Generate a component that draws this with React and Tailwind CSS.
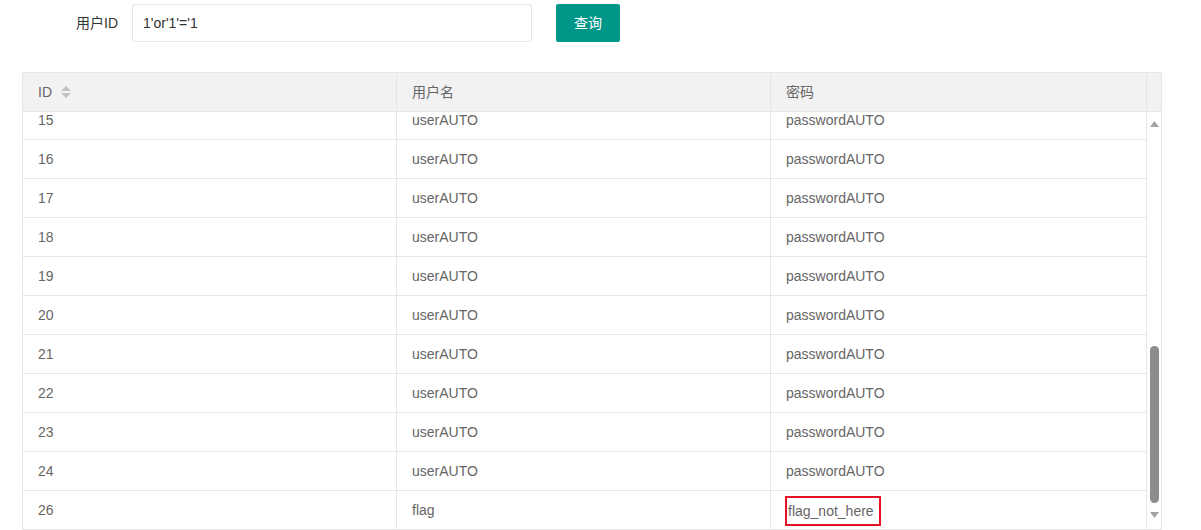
import React from "react";

const rows = [
  ["15", "userAUTO", "passwordAUTO"],
  ["16", "userAUTO", "passwordAUTO"],
  ["17", "userAUTO", "passwordAUTO"],
  ["18", "userAUTO", "passwordAUTO"],
  ["19", "userAUTO", "passwordAUTO"],
  ["20", "userAUTO", "passwordAUTO"],
  ["21", "userAUTO", "passwordAUTO"],
  ["22", "userAUTO", "passwordAUTO"],
  ["23", "userAUTO", "passwordAUTO"],
  ["24", "userAUTO", "passwordAUTO"],
  ["26", "flag", "flag_not_here"],
];

function SortIcon() {
  return (
    <svg width="10" height="12" viewBox="0 0 10 12" className="ml-[9px]">
      <path d="M5 0 L10 5 L0 5 Z" fill="#c2c2c2" />
      <path d="M0 7 L10 7 L5 12 Z" fill="#c2c2c2" />
    </svg>
  );
}

export default function App() {
  return (
    <div className="w-[1201px] h-[530px] bg-white overflow-hidden text-[14px] font-['Liberation_Sans','Noto_Sans_CJK_SC',sans-serif]">
      {/* Search form */}
      <div className="flex items-center pt-[4px]">
        <label className="w-[118px] text-right text-[#333] pr-0">用户ID</label>
        <div className="ml-[14px] w-[400px] h-[38px] border border-[#e6e6e6] rounded-[2px] flex items-center pl-[10px] text-[#333]">
          1'or'1'='1
        </div>
        <button className="ml-[24px] w-[64px] h-[38px] bg-[#009688] text-white rounded-[2px]">
          查询
        </button>
      </div>

      {/* Table */}
      <div className="mt-[30px] ml-[22px] w-[1140px] border-l border-t border-r border-[#e6e6e6] text-[#666]">
        <div className="flex h-[39px] bg-[#f2f2f2] border-b border-[#e6e6e6]">
          <div className="w-[374px] border-r border-[#e6e6e6] flex items-center pl-[15px]">
            ID
            <SortIcon />
          </div>
          <div className="w-[374px] border-r border-[#e6e6e6] flex items-center pl-[15px]">用户名</div>
          <div className="w-[376px] border-r border-[#e6e6e6] flex items-center pl-[15px]">密码</div>
          <div className="w-[14px]" />
        </div>

        <div className="flex h-[418px] overflow-hidden">
          <div className="w-[1124px] overflow-hidden">
            <div className="mt-[-11px]">
              {rows.map(([id, name, pwd]) => (
                <div key={id} className="flex h-[39px] border-b border-[#e6e6e6]">
                  <div className="w-[374px] border-r border-[#e6e6e6] flex items-center pl-[15px]">{id}</div>
                  <div className="w-[374px] border-r border-[#e6e6e6] flex items-center pl-[15px]">{name}</div>
                  <div className="w-[376px] border-r border-[#e6e6e6] flex items-center pl-[15px]">
                    {pwd === "flag_not_here" ? (
                      <span className="ml-[-1px] mt-[2px] h-[30px] px-[1px] pr-[5px] flex items-center border-2 border-[#e81123]">
                        {pwd}
                      </span>
                    ) : (
                      pwd
                    )}
                  </div>
                </div>
              ))}
            </div>
          </div>

          {/* Scrollbar */}
          <div className="w-[14px] flex flex-col items-center border-b border-[#e6e6e6]">
            <svg width="9" height="6" viewBox="0 0 9 6" className="mt-[9px]">
              <path d="M4.5 0 L9 6 L0 6 Z" fill="#a3a3a3" />
            </svg>
            <div className="mt-[219px] w-[9px] h-[157px] rounded-[5px] bg-[#8c8c8c]" />
            <svg width="9" height="6" viewBox="0 0 9 6" className="mt-[9px]">
              <path d="M0 0 L9 0 L4.5 6 Z" fill="#a3a3a3" />
            </svg>
          </div>
        </div>
      </div>
    </div>
  );
}
